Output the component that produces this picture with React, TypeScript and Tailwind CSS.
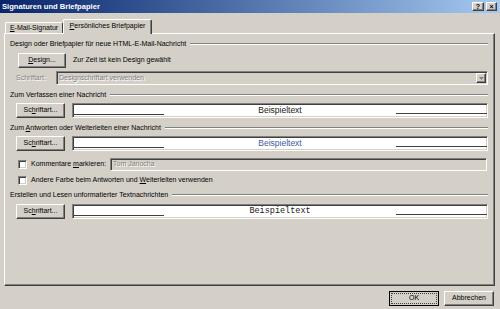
import React from "react";

const raised =
  "border border-t-white border-l-white border-r-[#404040] border-b-[#404040] shadow-[inset_-1px_-1px_0_#808080] bg-[#d4d0c8]";
const sunken =
  "border border-t-[#808080] border-l-[#808080] border-r-white border-b-white shadow-[inset_1px_1px_0_#404040,inset_-1px_-1px_0_#d4d0c8]";

const GroupHeader = ({ title, mt }: { title: React.ReactNode; mt: string }) => (
  <div className={`flex items-center h-[10px] pr-[6px] ${mt}`}>
    <span className="whitespace-nowrap">{title}</span>
    <div className="flex-1 ml-[4px] border-t border-t-[#808080] border-b border-b-white" />
  </div>
);

const FontButton = () => (
  <button className={`${raised} w-[49px] h-[15px] flex items-center justify-center`}>
    Sc<u>h</u>riftart...
  </button>
);

const Preview = ({ text, className }: { text: string; className: string }) => (
  <div className={`${sunken} flex-1 h-[15px] bg-white flex`}>
    <div className="w-[91px] self-end mb-[2px] border-b border-b-[#404040]" />
    <div className={`flex-1 text-center leading-[12px] ${className}`}>{text}</div>
    <div className="w-[91px] self-end mb-[3px] border-b border-b-[#404040]" />
  </div>
);

const Checkbox = () => <div className={`${sunken} w-[9px] h-[9px] bg-white shrink-0`} />;

export default function App() {
  return (
    <div
      className="w-[500px] h-[309px] bg-[#d4d0c8] flex flex-col text-[7px] text-black overflow-hidden"
      style={{ fontFamily: '"Liberation Sans", Arial, sans-serif' }}
    >
      <div className="h-[13px] bg-gradient-to-r from-[#0a246a] to-[#a6caf0] flex items-center pl-[2px] pr-[3px]">
        <span className="flex-1 text-white font-bold text-[7.6px]">Signaturen und Briefpapier</span>
        <div className={`${raised} w-[12px] h-[9px] flex items-center justify-center text-[7px] font-bold leading-none`}>?</div>
        <div className={`${raised} w-[11px] h-[9px] ml-[2px] flex items-center justify-center text-[7px] font-bold leading-none`}>×</div>
      </div>

      <div className="flex items-end h-[20px] pl-[5px] relative z-10">
        <div className="w-[58px] h-[11px] border-t border-l border-t-white border-l-white border-r border-r-[#404040] rounded-t-[2px] flex items-center justify-center">
          <span><u>E</u>-Mail-Signatur</span>
        </div>
        <div className="w-[89px] h-[15px] -mb-[1px] bg-[#d4d0c8] border-t border-l border-t-white border-l-white border-r border-r-[#404040] shadow-[inset_-1px_0_0_#808080] rounded-t-[2px] flex items-center justify-center pb-[1px]">
          <span><u>P</u>ersönliches Briefpapier</span>
        </div>
      </div>

      <div className="ml-[4px] w-[491px] h-[253px] border border-t-white border-l-white border-r-[#404040] border-b-[#404040] shadow-[inset_-1px_-1px_0_#808080] flex flex-col pl-[5px]">
        <GroupHeader title="Design oder Briefpapier für neue HTML-E-Mail-Nachricht" mt="mt-[5px]" />
        <div className="flex items-center mt-[4px] pl-[8px]">
          <button className={`${raised} w-[48px] h-[15px] flex items-center justify-center`}>
            <u>D</u>esign...
          </button>
          <span className="ml-[7px]">Zur Zeit ist kein Design gewählt</span>
        </div>
        <div className="flex items-center mt-[3px] pl-[6px] pr-[6px]">
          <span className="w-[40px] text-[#808080] [text-shadow:1px_1px_0_#fff]">Schriftart:</span>
          <div className={`${sunken} flex-1 h-[14px] flex items-center`}>
            <span className="flex-1 pl-[2px] text-[#808080] [text-shadow:1px_1px_0_#fff]">Designschriftart verwenden</span>
            <div className={`${raised} w-[10px] h-[10px] mr-[1px] flex items-center justify-center`}>
              <svg width="5" height="3" viewBox="0 0 5 3">
                <path d="M0 0h5L2.5 3z" fill="#808080" />
              </svg>
            </div>
          </div>
        </div>

        <GroupHeader title="Zum Verfassen einer Nachricht" mt="mt-[5px]" />
        <div className="flex items-center gap-[7px] mt-[3px] pl-[6px] pr-[6px]">
          <FontButton />
          <Preview text="Beispieltext" className="text-[#202020] text-[8.5px]" />
        </div>

        <GroupHeader title={<><span>Zum </span><u>A</u>ntworten oder Weiterleiten einer Nachricht</>} mt="mt-[5px]" />
        <div className="flex items-center gap-[7px] mt-[3px] pl-[6px] pr-[6px]">
          <FontButton />
          <Preview text="Beispieltext" className="text-[#3a5aa8] text-[8.5px]" />
        </div>

        <div className="flex items-center mt-[7px] pl-[8px] pr-[7px] h-[13px]">
          <Checkbox />
          <span className="ml-[4px] w-[79px]">Kommentare <u>m</u>arkieren:</span>
          <div className={`${sunken} flex-1 h-[13px] flex items-center pl-[2px] text-[#808080] [text-shadow:1px_1px_0_#fff]`}>
            Tom Janocha
          </div>
        </div>
        <div className="flex items-center mt-[4px] pl-[8px] h-[10px]">
          <Checkbox />
          <span className="ml-[4px]">
            Andere Farbe beim Antworten und <u>W</u>eiterleiten verwenden
          </span>
        </div>

        <GroupHeader title="Erstellen und Lesen unformatierter Textnachrichten" mt="mt-[5px]" />
        <div className="flex items-center gap-[7px] mt-[4px] pl-[6px] pr-[6px]">
          <FontButton />
          <Preview
            text="Beispieltext"
            className="text-[#202020] text-[8.5px] font-['Liberation_Mono',monospace]"
          />
        </div>
      </div>

      <div className="flex justify-end gap-[5px] mt-[5px] pr-[6px]">
        <button className="w-[50px] h-[15px] border border-black bg-[#d4d0c8] flex items-center justify-center">
          <div className="w-[46px] h-[11px] border border-dotted border-[#404040] flex items-center justify-center">OK</div>
        </button>
        <button className={`${raised} w-[50px] h-[15px] flex items-center justify-center`}>Abbrechen</button>
      </div>
    </div>
  );
}
